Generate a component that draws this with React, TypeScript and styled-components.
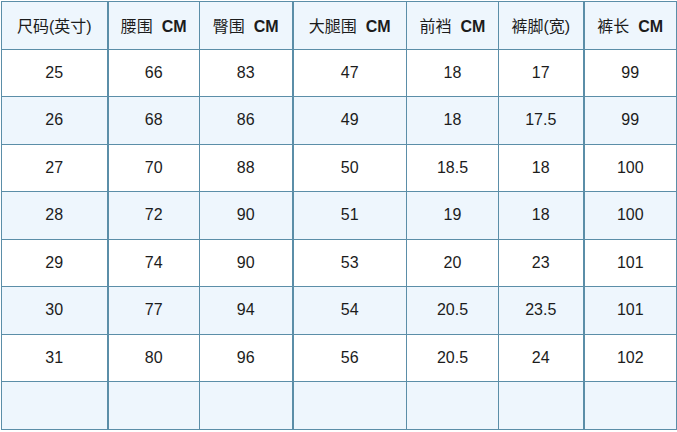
import styled, { createGlobalStyle } from "styled-components";

const GlobalStyle = createGlobalStyle`
  html, body {
    margin: 0;
    padding: 0;
    background: #ffffff;
  }
`;

const widths = [106, 92, 93, 114, 92, 85, 93];
const thick = [1, 3, 6];

const headers: { zh: string; unit?: string }[] = [
  { zh: "尺码(英寸)" },
  { zh: "腰围", unit: "CM" },
  { zh: "臀围", unit: "CM" },
  { zh: "大腿围", unit: "CM" },
  { zh: "前裆", unit: "CM" },
  { zh: "裤脚(宽)" },
  { zh: "裤长", unit: "CM" },
];

const rows = [
  ["25", "66", "83", "47", "18", "17", "99"],
  ["26", "68", "86", "49", "18", "17.5", "99"],
  ["27", "70", "88", "50", "18.5", "18", "100"],
  ["28", "72", "90", "51", "19", "18", "100"],
  ["29", "74", "90", "53", "20", "23", "101"],
  ["30", "77", "94", "54", "20.5", "23.5", "101"],
  ["31", "80", "96", "56", "20.5", "24", "102"],
  ["", "", "", "", "", "", ""],
];

export default function App() {
  return (
    <>
      <GlobalStyle />
      <Wrap>
        <Table>
          <colgroup>
            {widths.map((w, i) => (
              <col key={i} style={{ width: w }} />
            ))}
          </colgroup>
          <tbody>
            <Row $shade>
              {headers.map((h, i) => (
                <Cell key={i} $thickLeft={thick.includes(i)}>
                  {h.zh}
                  {h.unit && <Unit>{h.unit}</Unit>}
                </Cell>
              ))}
            </Row>
            {rows.map((r, ri) => (
              <Row key={ri} $shade={ri % 2 === 1}>
                {r.map((v, ci) => (
                  <Cell key={ci} $thickLeft={thick.includes(ci)}>
                    {v}
                  </Cell>
                ))}
              </Row>
            ))}
          </tbody>
        </Table>
      </Wrap>
    </>
  );
}

const Wrap = styled.div`
  padding: 1px 0 0 1px;
  width: 677px;
  height: 432px;
  box-sizing: border-box;
  overflow: hidden;
`;

const Table = styled.table`
  border-collapse: collapse;
  table-layout: fixed;
  width: 675px;
  border: 1px solid #5b8ea8;
  font-family: "Liberation Sans", Arial, "Noto Sans CJK SC", sans-serif;
  font-size: 16px;
  color: #1c1c1c;
`;

const Row = styled.tr<{ $shade?: boolean }>`
  height: 47.5px;
  background: ${(p) => (p.$shade ? "#eef6fd" : "#ffffff")};
`;

const Cell = styled.td<{ $thickLeft?: boolean }>`
  padding: 0;
  text-align: center;
  vertical-align: middle;
  border-top: 1px solid #5b8ea8;
  border-bottom: 1px solid #5b8ea8;
  border-left: ${(p) => (p.$thickLeft ? "2px" : "1px")} solid #5b8ea8;
  white-space: pre;
`;

const Unit = styled.b`
  font-weight: 700;
  margin-left: 9px;
`;
